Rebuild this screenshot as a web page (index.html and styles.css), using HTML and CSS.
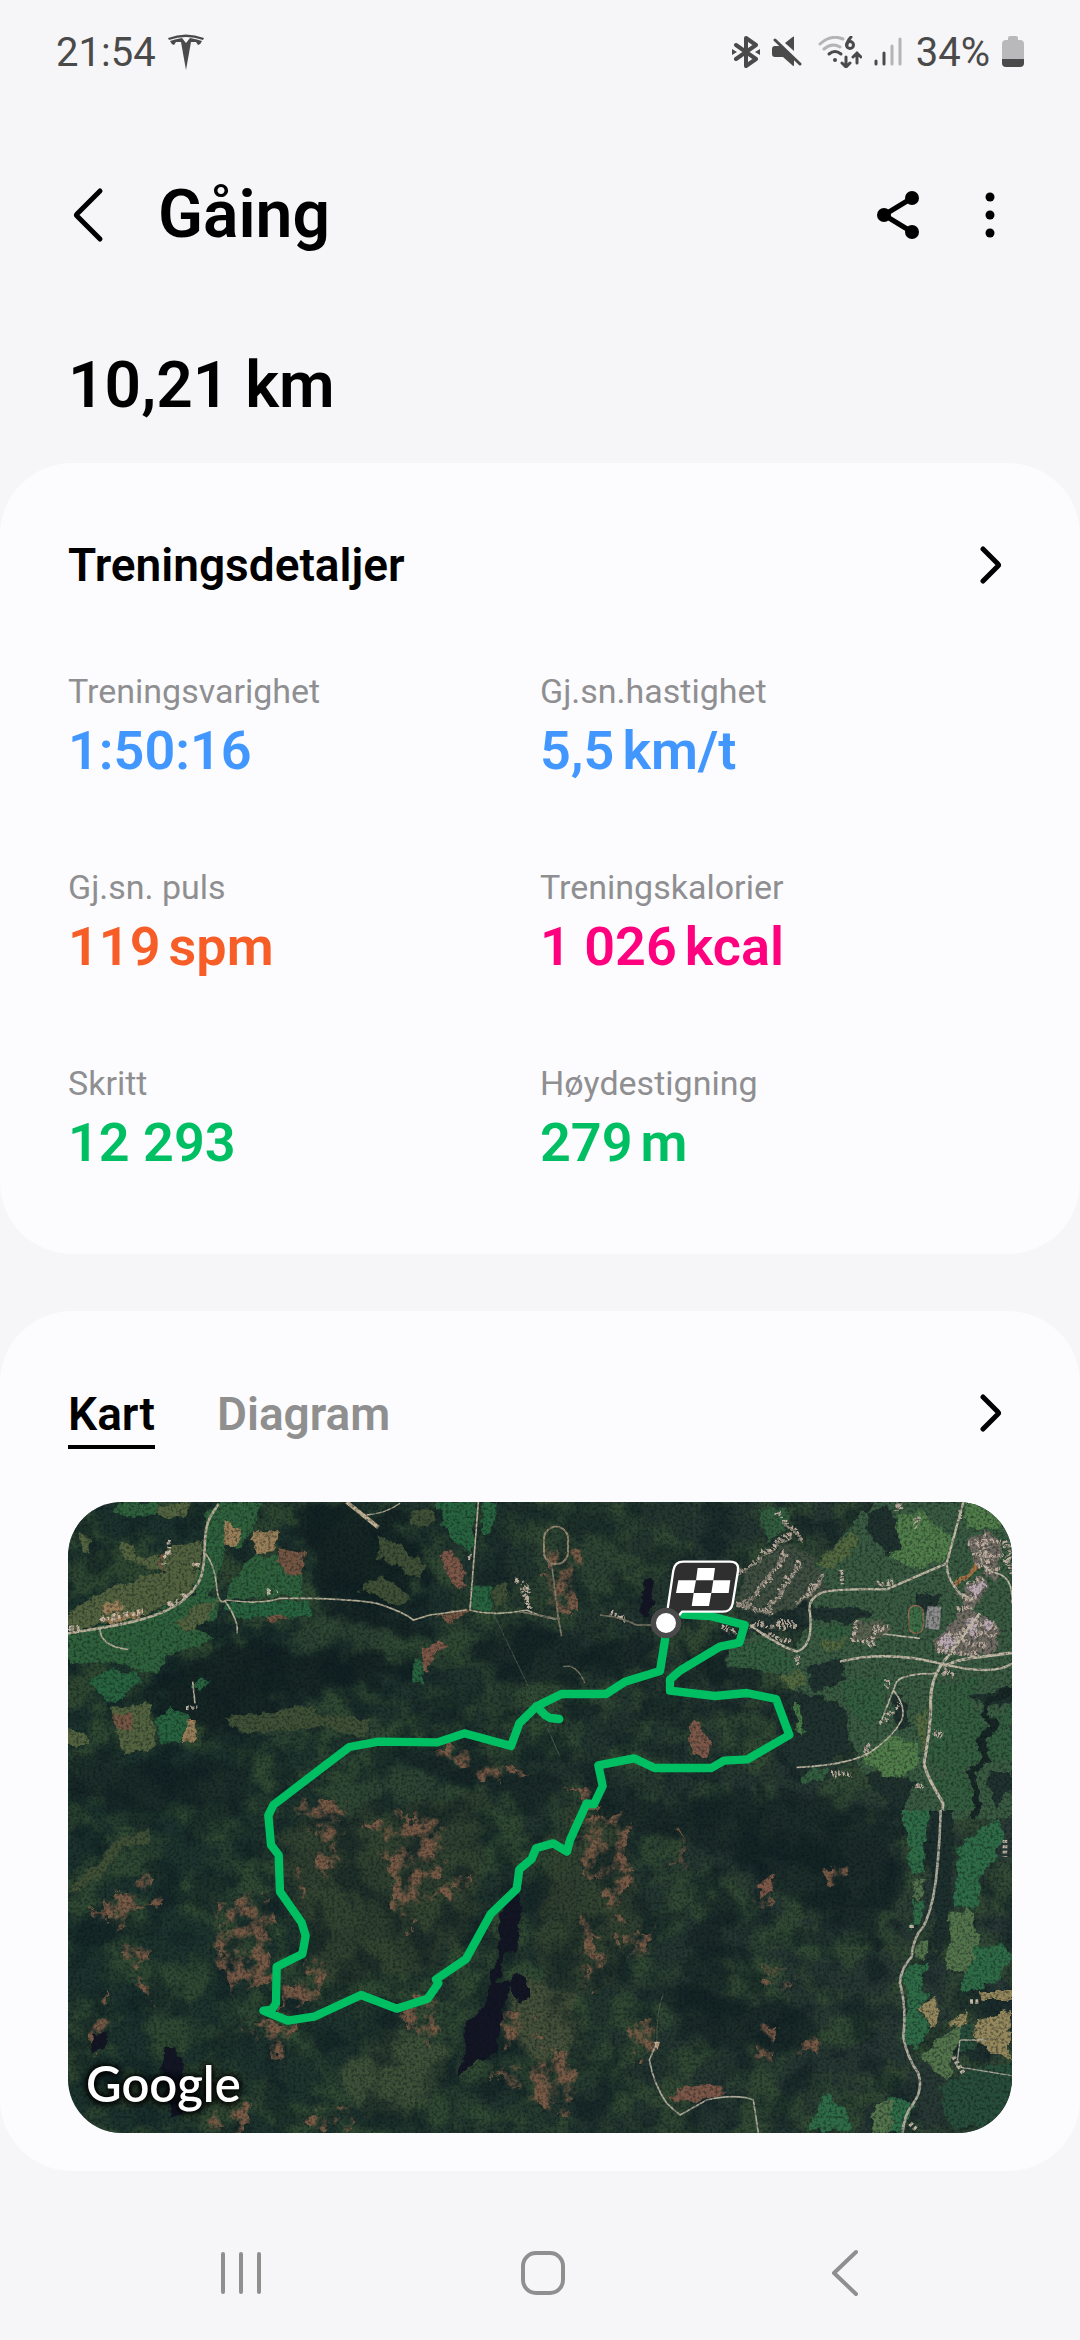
FILE: index.html
```html
<!DOCTYPE html>
<html lang="nb">
<head>
    <meta charset="UTF-8">
    <meta name="viewport" content="width=device-width, initial-scale=1.0">
    <title>Gåing</title>
    <link rel="stylesheet" href="styles.css">
</head>
<body>
    <div class="status-bar">
        <div class="status-left">
            <span>21:54</span>
            <svg width="36" height="36" viewBox="0 0 36 36" fill="#4a4a4a" aria-hidden="true">
                <path d="M0 4Q18-3 36 4L35 6Q18 0 1 6Z"/>
                <path d="M2 7Q8 5 14 4L18 9L22 4Q28 5 34 7Q33 10 30 11L28 8L23 8L18 36L13 8L8 8L6 11Q3 10 2 7Z"/>
            </svg>
        </div>
        <div class="status-right">
            <svg width="28" height="32" viewBox="0 0 28 32" aria-hidden="true">
                <path d="M4 9L24 23L14 30V2L24 9L4 23" fill="none" stroke="#4a4a4a" stroke-width="4" stroke-linejoin="round" stroke-linecap="round"/>
                <path d="M0 13L5 16L0 19ZM28 13L23 16L28 19Z" fill="#4a4a4a"/>
            </svg>
            <svg width="30" height="32" viewBox="0 0 30 32" fill="#4a4a4a" aria-hidden="true">
                <path d="M22 1V15L13 7L20 1.500Q22 0 22 1Z"/>
                <path d="M3 10H8L22 23V29Q22 31 20 29L11 21H3Q0 21 0 18V13Q0 10 3 10Z"/>
                <path d="M3 4L28 28" stroke="#4a4a4a" stroke-width="3" stroke-linecap="round"/>
            </svg>
            <svg class="wifi" width="44" height="32" viewBox="0 0 44 32" fill="none" stroke-linecap="round" stroke-width="3" aria-hidden="true">
                <path d="M2 8Q13-2 25 3M6 13Q14 6 22 11" stroke="#b4b4b6"/>
                <path d="M11 18Q17 13 23 18" stroke="#4a4a4a"/>
                <circle cx="17" cy="24" r="2" fill="#4a4a4a"/>
                <path d="M33 1Q29 5 29 9" stroke="#4a4a4a"/>
                <circle cx="32" cy="9" r="3.500" stroke="#4a4a4a"/>
                <path d="M28 21V30M24 27L28 31L32 27M39 27V18M35 21L39 17L43 21" stroke="#4a4a4a"/>
            </svg>
            <svg width="28" height="32" viewBox="0 0 28 32" fill="none" stroke-linecap="round" stroke-width="3" aria-hidden="true">
                <path d="M2 25V28M10 17V28" stroke="#4a4a4a"/>
                <path d="M18 10V28M26 3V28" stroke="#b4b4b6"/>
            </svg>
            <span class="battery-text">34%</span>
            <svg width="22" height="32" viewBox="0 0 22 32" aria-hidden="true">
                <path d="M8 0H14Q16 0 16 2V4H18Q22 4 22 8V24H0V8Q0 4 4 4H6V2Q6 0 8 0Z" fill="#b9b9bb"/>
                <path d="M0 23H22V27Q22 31 18 31H4Q0 31 0 27Z" fill="#4a4a4a"/>
            </svg>
        </div>
    </div>

    <header class="app-bar">
        <button class="icon-btn" aria-label="Tilbake">
            <svg width="40" height="60" viewBox="0 0 40 60"><path d="M32 6L9 29Q8 30 9 31L32 54" class="line"/></svg>
        </button>
        <h1>Gåing</h1>
        <button class="icon-btn" aria-label="Del">
            <svg width="48" height="48" viewBox="0 0 48 48">
                <path d="M38 7L10 24L38 41" fill="none" stroke="#000" stroke-width="5"/>
                <circle cx="10" cy="24" r="7"/><circle cx="38" cy="7" r="7"/><circle cx="38" cy="41" r="7"/>
            </svg>
        </button>
        <button class="icon-btn menu-btn" aria-label="Flere valg">
            <svg width="20" height="48" viewBox="0 0 20 48">
                <circle cx="10" cy="6" r="4.500"/><circle cx="10" cy="24" r="4.500"/><circle cx="10" cy="42" r="4.500"/>
            </svg>
        </button>
    </header>

    <main>
        <p class="distance">10,21 km</p>

        <section class="card details">
            <div class="card-head">
                <h2>Treningsdetaljer</h2>
                <button class="icon-btn" aria-label="Vis treningsdetaljer">
                    <svg width="32" height="44" viewBox="0 0 32 44"><path d="M3 6L18 21Q19 22 18 23L3 38" class="line"/></svg>
                </button>
            </div>
            <dl class="stats">
                <div><dt>Treningsvarighet</dt><dd class="blue">1:50:16</dd></div>
                <div><dt>Gj.sn.hastighet</dt><dd class="blue">5,5<span class="unit">km/t</span></dd></div>
                <div><dt>Gj.sn. puls</dt><dd class="orange">119<span class="unit">spm</span></dd></div>
                <div><dt>Treningskalorier</dt><dd class="pink">1 026<span class="unit">kcal</span></dd></div>
                <div><dt>Skritt</dt><dd class="green">12 293</dd></div>
                <div><dt>Høydestigning</dt><dd class="green">279<span class="unit">m</span></dd></div>
            </dl>
        </section>

        <section class="card">
            <div class="card-head">
                <div class="tabs" role="tablist">
                    <button class="tab active" role="tab" aria-selected="true">Kart</button>
                    <button class="tab" role="tab" aria-selected="false">Diagram</button>
                </div>
                <button class="icon-btn" aria-label="Vis kart">
                    <svg width="32" height="44" viewBox="0 0 32 44"><path d="M3 6L18 21Q19 22 18 23L3 38" class="line"/></svg>
                </button>
            </div>

            <div class="map">
                <svg viewBox="0 0 2832 1893" role="img" aria-label="Kart over turen">
                    <defs>
                        <filter id="rough" x="0" y="0" width="2832" height="1893" filterUnits="userSpaceOnUse">
                            <feTurbulence type="fractalNoise" baseFrequency="0.015" numOctaves="5" seed="3" result="n"/>
                            <feDisplacementMap in="SourceGraphic" in2="n" scale="130" xChannelSelector="R" yChannelSelector="G"/>
                            <feGaussianBlur stdDeviation="7"/>
                        </filter>
                        <filter id="edge" x="0" y="0" width="2832" height="1893" filterUnits="userSpaceOnUse">
                            <feTurbulence type="fractalNoise" baseFrequency="0.03" numOctaves="3" seed="8" result="n"/>
                            <feDisplacementMap in="SourceGraphic" in2="n" scale="34" xChannelSelector="R" yChannelSelector="G"/>
                        </filter>
                        <filter id="hills" x="0" y="0" width="100%" height="100%">
                            <feTurbulence type="fractalNoise" baseFrequency="0.008" numOctaves="6" seed="11"/>
                            <feColorMatrix values="0 0 0 0 .22  0 0 0 0 .32  0 0 0 0 .21  5 0 0 0 -2.1"/>
                        </filter>
                        <filter id="shade" x="0" y="0" width="100%" height="100%">
                            <feTurbulence type="fractalNoise" baseFrequency="0.009" numOctaves="6" seed="29"/>
                            <feColorMatrix values="0 0 0 0 .06  0 0 0 0 .12  0 0 0 0 .14  0 5 0 0 -2.4"/>
                        </filter>
                        <filter id="grain" x="0" y="0" width="100%" height="100%">
                            <feTurbulence type="fractalNoise" baseFrequency="0.12" numOctaves="3" seed="5"/>
                            <feColorMatrix values="0 0 0 0 .03  0 0 0 0 .07  0 0 0 0 .08  0 0 3 0 -1.3"/>
                        </filter>
                        <filter id="soil" x="0" y="0" width="2832" height="1893" filterUnits="userSpaceOnUse">
                            <feTurbulence type="fractalNoise" baseFrequency="0.02" numOctaves="5" seed="17" result="n"/>
                            <feDisplacementMap in="SourceGraphic" in2="n" scale="90" xChannelSelector="R" yChannelSelector="G" result="d"/>
                            <feColorMatrix in="n" values="0 0 0 0 1  0 0 0 0 1  0 0 0 0 1  0 0 5 0 -2.1" result="m"/>
                            <feComposite in="d" in2="m" operator="in"/>
                            <feGaussianBlur stdDeviation="2"/>
                        </filter>
                        <linearGradient id="land" x2="1">
                            <stop offset="0" stop-color="#1c332d"/>
                            <stop offset=".5" stop-color="#22352e"/>
                            <stop offset="1" stop-color="#2a3a36"/>
                        </linearGradient>
                    </defs>

                    <rect width="2832" height="1893" fill="url(#land)"/>
                    <rect width="2832" height="1893" filter="url(#hills)" opacity=".7"/>

                    <!-- lighter slopes and dark ridges -->
                    <g filter="url(#rough)">
                        <path d="M640 360L860 350L1040 400L930 450L680 430ZM480 640L740 600L960 660L940 720L740 700L560 715ZM780 840L1060 800L1200 880L1180 1000L860 1010ZM1400 20L1640 10V330L1440 330Z" fill="#314734" opacity=".8"/>
                        <path d="M640 960L1250 880L1240 1200L1040 1450L740 1440L680 1250ZM1480 940L1700 920L1720 1300L1560 1500L1400 1340Z" fill="#354330" opacity=".7"/>
                        <path d="M820 1700L1000 1570L1150 1650L1110 1800L950 1860L850 1790Z" fill="#3d5138"/>
                        <path d="M1340 1400L1500 1480L1540 1640L1420 1700L1300 1600Z" fill="#445039"/>
                        <path d="M660 20H840L1000 60L1090 200L1020 330L760 280L720 130ZM220 560L480 430L960 450L1040 520L700 580L420 700L300 620ZM740 310Q920 290 1080 370L1060 420Q900 370 740 350Z" fill="#142424" opacity=".9"/>
                        <path d="M0 760L560 780L540 900L200 930L0 900ZM900 700L1300 800L1500 860L1400 890L1100 820ZM1540 900L2100 860L2500 960L2460 1340L2160 1200L1980 1060L1620 960ZM1840 1380L1960 1100L2010 1200L1960 1500L2160 1500L2260 1640L1960 1650L1820 1580ZM1300 380L1760 420L1700 500L1400 560L1200 480ZM1840 440L2060 480L2160 600L1980 540L1860 540ZM2120 600L2340 640L2300 740L2180 760Z" fill="#172727" opacity=".75"/>
                    </g>
                    <rect width="2832" height="1893" filter="url(#shade)" opacity=".55"/>

                    <!-- clear-cut areas -->
                    <g filter="url(#soil)" fill="#86604a" opacity=".85">
                        <path d="M670 900L830 880L820 990L790 1150L740 1100L750 980ZM900 960L1130 930L1120 1070L1020 1280L980 1200L960 1080ZM440 1200L620 1180L600 1440L520 1500L450 1400ZM1040 1180L1220 1120L1180 1200Z"/>
                        <path d="M640 1450L760 1370L780 1440L720 1510L640 1540ZM520 1550L680 1560L640 1680L560 1600ZM970 1520L1120 1480L1100 1640ZM80 1220L240 1120L280 1190L120 1280ZM60 1560L120 1450L130 1600L80 1640ZM150 1340L270 1330L180 1430ZM180 1430L240 1440L250 1500ZM720 1830L880 1810L840 1880L720 1880ZM400 1830L560 1810L520 1893H420Z"/>
                        <path d="M1510 960L1680 920L1690 1120L1560 1140ZM1600 1120L1680 1120L1650 1340L1620 1240ZM1540 1220L1590 1240L1600 1400L1550 1480ZM1680 1300L1790 1280L1700 1380ZM2060 1150L2140 1100L2120 1200L2060 1220ZM2260 1100L2340 1090L2320 1180ZM1830 950L1860 1100L1820 1100ZM2080 1380L2200 1410L2120 1490ZM1680 1580L1760 1540L1770 1640L1700 1670ZM2180 1640L2270 1600L2250 1680ZM2060 1580L2120 1580L2120 1680H2070ZM1260 1710L1500 1640L1540 1780L1480 1860L1380 1780ZM1290 1540L1400 1520L1420 1600L1320 1640Z"/>
                        <path d="M1440 140L1530 150L1520 330L1440 320ZM1480 860L1600 860L1580 930ZM1100 740L1200 740L1370 820L1300 850ZM660 1100L700 1080L700 1200Z"/>
                    </g>
                    <path filter="url(#edge)" d="M1800 1780L1840 1760L1900 1750L1960 1755L1965 1780L1900 1795L1820 1800ZM2070 1150L2120 1110L2115 1160L2080 1195ZM1130 140L1155 145L1195 220L1185 260L1145 240L1115 180ZM1065 440L1110 418L1145 435L1100 460L1075 510L1060 500ZM1860 670L1890 660L1930 730L1905 765L1875 765Z" fill="#7d5848"/>

                    <!-- lakes -->
                    <g filter="url(#edge)" fill="#131524">
                        <path d="M1320 1190L1350 1180L1365 1220L1350 1330L1310 1360L1290 1440L1320 1440L1350 1410L1380 1430L1380 1490L1350 1500L1320 1460L1300 1540L1280 1660L1220 1680L1170 1720L1190 1650L1190 1560L1250 1520L1265 1440L1290 1360L1295 1240Z"/>
                        <path d="M1730 230L1745 230L1760 300L1735 350L1718 340ZM290 1640L320 1630L350 1700L340 1840L310 1840L280 1700ZM75 1600L120 1590L110 1640L70 1650Z"/>
                    </g>

                    <!-- fields, west -->
                    <g transform="translate(-24 -36)">
                        <g filter="url(#edge)">
                            <path d="M165 36H290L285 80L220 85L160 70ZM440 60L500 36H600L580 110L540 180L500 140L470 290L430 320L400 290L430 200ZM590 195L650 200L730 270L720 320L500 325L520 260ZM24 432L240 388L350 345L420 300L480 330L470 380L400 410L460 440L380 480L320 500L290 555L210 540L190 520L24 522Z" fill="#2f613c"/>
                            <path d="M490 340L755 330V380L600 385L520 385ZM85 570L180 530L250 570L200 610L170 640L120 620ZM285 690L330 650L390 680L360 755L300 755ZM395 580L450 565L415 610ZM1130 36H1250L1235 190L1190 160L1150 110ZM1270 36H1310L1295 130L1265 130ZM1235 290H1295V360L1230 355ZM1060 500L1085 510L1090 590L1060 580Z" fill="#28633f"/>
                            <path d="M290 45L390 40L380 75L320 85L285 70ZM175 155L215 160L230 200L300 200L330 170L430 150L420 230L350 260L290 240L230 225L190 200ZM24 370L120 310L250 260L330 250L420 240L400 300L330 350L240 380L24 425ZM150 650L270 640L290 770L190 790ZM24 710L90 740L80 765L24 765ZM350 400L400 350L480 330L440 390L380 430ZM50 130L85 135L95 190L70 180Z" fill="#53633f"/>
                            <path d="M950 140L1000 150L1100 230L1080 260L1020 240L960 200ZM1045 60L1130 60L1110 110L1060 110ZM900 300L960 250L1050 330L1020 350ZM495 680L640 670L720 640L770 670L930 690L900 745L800 710L640 720L540 735ZM1300 290L1350 280L1330 350L1300 350ZM24 1200L100 1130L180 1040L270 1020L270 1060L190 1070L130 1150L60 1200Z" fill="#3f5036"/>
                            <path d="M490 90L545 120L530 165L495 165ZM575 130L660 130L640 180L590 195ZM120 340L190 330L180 365L120 370ZM380 690L410 690V750L365 760ZM120 380L260 360L240 385L150 402Z" fill="#9a8059"/>
                            <path d="M660 175L735 185L725 265L690 250L650 215ZM610 380H680L640 405ZM160 670L230 675L210 720L165 715ZM1130 370L1230 360L1160 405ZM300 200L320 180L300 260Z" fill="#745643"/>
                        </g>
                        <g fill="none" stroke="#b5ae96" stroke-width="5">
                            <path d="M24 430C150 410 300 390 370 330S430 230 435 150S465 70 475 40" stroke-width="8"/>
                            <path d="M437 190Q465 230 470 290T500 330Q600 345 660 325L760 325M497 335Q540 400 530 430M405 640L398 575M120 415Q120 470 205 478"/>
                            <path d="M760 325Q900 330 950 340Q1030 365 1060 390L1110 375L1220 360M1255 36L1230 360Q1300 380 1400 360Q1450 385 1500 388"/>
                            <path d="M860 36L955 112" stroke="#c0b093" stroke-width="12"/>
                            <path d="M920 75Q980 70 1020 40" stroke-width="4"/>
                            <path d="M1300 370L1420 620L1500 800" stroke="#46584b" stroke-width="3"/>
                        </g>
                        <g filter="url(#edge)" fill="none" stroke="#c9b8a6" stroke-width="14" stroke-dasharray="14 8 6 9">
                            <path d="M325 150L320 220M120 385L260 365M330 345L380 310M24 415H60M620 310L655 300M375 650L415 650M1360 270L1405 300V350M410 230V210M1220 200H1240"/>
                        </g>
                    </g>

                    <!-- fields and town, east -->
                    <g transform="translate(1356 -36)">
                        <g filter="url(#edge)">
                            <path d="M870 260L950 160L1010 90L1060 36H1480V990H1250L1140 970L1190 870L1110 850L1020 850L1000 770L960 640L830 600L780 545L620 530L620 470L700 430L820 480L870 400Z" fill="#3a5a41"/>
                            <path d="M1130 80L1200 60L1290 140L1280 210L1190 240L1100 200ZM1330 36H1400L1455 120L1340 110ZM1030 800L1110 730L1190 760L1200 820L1110 880Z" fill="#517d4a"/>
                            <path d="M960 580L1100 560L1090 680L1020 700L980 640ZM1245 590L1380 560L1350 640L1395 700L1390 800L1300 860L1225 820ZM1400 720L1476 640V810L1400 810ZM1240 870L1350 850L1365 960L1280 950ZM870 410H990V430L910 450ZM620 480L740 440L830 520L790 545L640 530ZM840 850L920 830V870L850 880ZM720 60L800 50V120L740 150Z" fill="#335d3e"/>
                            <path d="M890 220L1000 120L1010 170L940 240ZM780 560L840 540L860 580L810 600ZM1180 700L1220 650V800ZM900 460L980 440L960 480L910 490Z" fill="#52683f"/>
                            <path d="M1040 60L1110 50L1150 180L1100 200L1050 130ZM860 530L960 500L980 570L880 610ZM1340 620L1476 590V640L1400 650ZM870 360L990 350L1060 370L980 400L880 390ZM850 620L980 650L990 780L840 860L780 780ZM1110 620L1150 620L1170 700L1130 720ZM1400 840L1476 840V900L1420 960ZM1190 310L1260 310L1240 370H1190ZM1030 850L1180 870L1140 960L1060 900Z" fill="#20322e"/>
                            <path d="M830 640L860 720L840 730L815 640Z" fill="#477845"/>
                            <path d="M680 240L800 160L860 180L900 250L920 300L840 350L740 380L650 350Z" fill="#404f41"/>
                        </g>
                        <path filter="url(#edge)" d="M1480 600L1410 630L1390 675L1425 700L1385 750L1400 810L1350 850L1370 900L1365 990" fill="none" stroke="#182725" stroke-width="20"/>
                        <!-- built-up area -->
                        <g filter="url(#edge)">
                            <path d="M1340 150L1400 120L1450 160L1430 280L1400 250L1360 210ZM1310 320L1390 250L1400 310L1350 360ZM1250 450L1330 350L1430 400L1440 470L1380 500L1300 490L1240 480Z" fill="#716c63"/>
                            <path d="M1000 400L1080 390L1120 420L1060 460L1000 450Z" fill="#59624f"/>
                            <path d="M1300 280L1370 220L1378 232L1310 295Z" fill="#a57446"/>
                            <g fill="none" stroke="#bfada0" stroke-width="15" stroke-dasharray="9 5 6 7">
                                <path d="M770 70L850 150M810 130L730 190L660 250M800 190L760 250L690 330M840 220L790 290L740 370M910 260L880 290L830 340M650 340L760 370M700 410L830 400M720 430L820 460M960 240L970 290M1070 280H1120M1010 400L1000 450L1060 460L1060 410L1110 415M1190 80V110M1140 40V60"/>
                                <path d="M1340 160L1440 150M1350 190L1450 200M1370 230L1440 240M1390 130L1400 220M1320 60V90M1460 150L1476 260M1100 570V590M1080 700L1140 640M1240 720L1270 740M1270 540L1300 560M1040 770V790M600 410L650 430M930 850H1000M1190 880L1220 890M830 500V520M0 290L30 350M270 370L310 385"/>
                                <path d="M1340 280L1390 270M1320 320L1370 330M1310 360L1360 350M1340 390L1430 410M1330 420L1430 440M1300 450L1400 470M1260 460L1310 480M1250 480L1380 495M1290 430L1330 440"/>
                            </g>
                            <g fill="none" stroke="#8d8578" stroke-width="6">
                                <path d="M790 100L850 145M815 140L660 245M800 190L690 330L650 345M830 230L740 370L660 340M910 260Q900 300 830 345"/>
                            </g>
                            <path d="M1345 300L1375 280L1395 290L1365 325ZM1265 445L1290 430L1305 465L1275 485ZM1335 395L1365 380L1380 420L1350 440ZM1385 400L1415 390L1405 420Z" fill="#bbaab2"/>
                        </g>
                        <path d="M1222 348L1264 350L1258 420L1215 415Z" fill="#8c8c8c"/>
                        <rect x="1166" y="346" width="44" height="84" rx="22" fill="#3d6e45" stroke="#9a6a55" stroke-width="4"/>
                        <g fill="none" stroke="#c0b8a4" stroke-width="7">
                            <path d="M690 405Q780 470 830 485Q880 470 870 370Q860 330 900 310Q930 295 1100 298L1280 220L1330 36M1280 220Q1280 270 1320 310L1360 330M960 515Q1100 480 1260 520T1476 520"/>
                            <path d="M1476 488L1350 505Q1310 510 1270 530M1380 370L1260 530Q1230 580 1232 640T1212 820Q1220 860 1270 940L1260 990" stroke-width="9"/>
                            <path d="M1250 550Q1150 550 1130 575L1085 690M1120 600Q1160 650 1145 690Q1120 740 1060 780Q1000 825 830 832M1090 432L1200 445M1380 180Q1380 240 1430 250T1476 340" stroke-width="5"/>
                            <rect x="72" y="110" width="72" height="112" rx="36" stroke="#94866c" stroke-width="6"/>
                            <path d="M95 222L115 385L125 440M0 365L120 388M240 375Q300 380 350 405H400" stroke="#7f7a67" stroke-width="5"/>
                            <path d="M130 530Q170 520 195 580" stroke="#7f7a67" stroke-width="4"/>
                        </g>
                    </g>

                    <!-- fields and roads, south-east -->
                    <g transform="translate(1356 924)">
                        <g filter="url(#edge)">
                            <path d="M1145 0H1230L1210 110L1215 180L1170 200L1160 80ZM1180 270H1215L1200 340L1180 370ZM1160 470L1225 460L1200 520L1225 560L1190 600L1225 660L1180 730L1150 680L1165 580L1145 510ZM1320 110L1440 20L1450 100L1385 200L1370 300L1300 290ZM1350 410L1450 400L1476 440L1430 520L1320 550ZM915 850L980 900L990 960H860ZM1060 930L1110 860L1190 880L1140 968H1050Z" fill="#2f6b46"/>
                            <path d="M1200 740L1320 640V700L1290 750L1290 820ZM1290 310L1350 300L1380 390L1340 480L1280 480ZM1190 210H1210L1200 270L1185 260ZM1180 400L1225 400L1220 440H1180ZM1070 880L1130 870L1110 968H1050Z" fill="#54744c"/>
                            <path d="M1190 590L1255 560L1255 640L1230 660ZM1280 640L1340 600V640L1290 650ZM1360 640L1470 600V750L1370 700ZM1370 540L1476 540V570L1390 570Z" fill="#95885d"/>
                            <path d="M1320 640H1360V720L1320 730ZM1360 770L1476 760V900L1400 950L1290 950L1260 830Z" fill="#284d3a"/>
                            <path d="M1340 720L1400 710L1390 750L1350 760ZM1230 0H1300L1290 300L1250 480L1240 300Z" fill="#1e302d"/>
                        </g>
                        <g fill="none" stroke="#aeab9b" stroke-width="8">
                            <path d="M1262 0Q1260 90 1250 190T1210 350Q1180 380 1175 440Q1140 480 1140 520Q1160 590 1150 680Q1160 740 1195 790Q1210 840 1180 880Q1150 920 1148 968"/>
                            <path d="M410 700L388 750Q400 820 440 880L480 915L560 870Q650 850 700 870L715 968" stroke-width="5"/>
                            <path d="M1320 690L1310 770L1476 797M1320 690H1400" stroke-width="4"/>
                            <path d="M410 700Q410 600 430 550" stroke="#56604f" stroke-width="3"/>
                            <path d="M1300 740L1330 790M1175 345V360M1350 575L1380 575M1455 90V140M1170 940L1190 960" stroke="#c6bba9" stroke-width="14" stroke-dasharray="9 7"/>
                        </g>
                        <path d="M402 695H420L412 720Z" fill="#c9a98b"/>
                    </g>

                    <rect width="2832" height="1893" filter="url(#grain)" opacity=".45"/>

                    <!-- walked route -->
                    <g fill="none" stroke="#00bf63" stroke-width="25" stroke-linejoin="round" stroke-linecap="round">
                        <path d="M1794 363L1791 414L1776 507L1671 539L1614 576H1481L1406 613L1354 664L1329 732L1189 694L1108 721L931 719L844 735L616 909L601 940L609 1029L632 1059L636 1169L701 1262L713 1302L703 1356L626 1394L624 1504L611 1524L586 1526L659 1556L738 1544L879 1479L986 1520L1079 1490L1111 1444L1104 1432L1194 1371L1268 1236L1346 1161L1354 1102L1391 1071L1404 1039L1456 1024L1497 1049L1506 1014L1556 904L1578 907L1604 852L1591 790L1698 769L1760 798H1930L1968 776L2038 772L2164 699L2124 591L2036 573L1941 582L1806 566V532L1836 506L1956 434L2014 422L2030 369L1926 342L1846 338"/>
                        <path d="M1406 613L1431 639L1446 648L1474 651"/>
                    </g>

                    <!-- finish flag and start point -->
                    <g transform="translate(1356 -36)">
                        <path d="M442 362L460 242Q464 215 490 215H630Q658 215 654 242L638 340Q634 365 608 365H486L470 385Z" fill="#2f2f2f" stroke="#fff" stroke-width="7" stroke-linejoin="round"/>
                        <path d="M533 234H585L580 271H631L626 309H574L567 348H515L521 309H468L475 271H528ZM528 271L521 309H574L580 271Z" fill="#fff" fill-rule="evenodd"/>
                        <circle cx="438" cy="399" r="38" fill="#fff" stroke="#4a4a4a" stroke-width="16"/>
                    </g>
                </svg>
                <span class="map-brand">Google</span>
            </div>
        </section>
    </main>

    <nav class="nav-bar">
        <button class="icon-btn" aria-label="Nylige apper">
            <svg width="48" height="48" viewBox="0 0 48 48"><path d="M6 5V43M24 5V43M42 5V43" class="nav-line"/></svg>
        </button>
        <button class="icon-btn" aria-label="Hjem">
            <svg width="48" height="48" viewBox="0 0 48 48"><rect x="4" y="4" width="40" height="40" rx="13" class="nav-line"/></svg>
        </button>
        <button class="icon-btn" aria-label="Tilbake">
            <svg width="48" height="48" viewBox="0 0 48 48"><path d="M35 3L13 24L35 45" class="nav-line"/></svg>
        </button>
    </nav>
</body>
</html>
```
FILE: styles.css
```css
* {
    box-sizing: border-box;
}
body {
    margin: 0;
    background: #f6f6f8;
    color: #000;
    font-family: Roboto, "Noto Sans", sans-serif;
}
h1, h2, p, dl, dd {
    margin: 0;
}
svg {
    display: block;
}
.icon-btn {
    display: block;
    padding: 0;
    border: none;
    background: none;
    cursor: pointer;
}
.line {
    fill: none;
    stroke: #000;
    stroke-width: 5px;
    stroke-linecap: round;
    stroke-linejoin: round;
}

/* status bar */
.status-bar {
    display: flex;
    justify-content: space-between;
    align-items: center;
    height: 104px;
    padding: 0 56px;
    color: #4a4a4a;
    font-size: 40px;
}
.status-left {
    display: flex;
    align-items: center;
    gap: 12px;
}
.status-right {
    display: flex;
    align-items: center;
    gap: 12px;
}
.wifi {
    margin-left: 4px;
}
.battery-text {
    margin-left: 2px;
}

/* app bar */
.app-bar {
    display: flex;
    align-items: center;
    padding: 71px 80px 71px 68px;
}
.app-bar h1 {
    flex: 1;
    margin-left: 50px;
    font-size: 66px;
    font-weight: 600;
    line-height: 80px;
}
.menu-btn {
    margin-left: 58px;
}
.distance {
    padding: 20px 68px 37px;
    font-size: 64px;
    font-weight: 600;
    line-height: 80px;
}

/* cards */
.card {
    padding: 72px 68px 38px;
    background: #fcfcfe;
    border-radius: 72px;
}
.card.details {
    margin-bottom: 57px;
    padding-bottom: 73px;
}
.card-head {
    display: flex;
    justify-content: space-between;
    align-items: flex-start;
    height: 64px;
}
.card-head h2 {
    font-size: 46px;
    font-weight: 600;
    line-height: 60px;
}
.card-head .icon-btn {
    margin-top: 8px;
}
.stats {
    display: grid;
    grid-template-columns: 1fr 1fr;
    row-gap: 76px;
    margin-top: 70px;
}
.stats dt {
    color: #8f8f92;
    font-size: 34px;
    line-height: 44px;
}
.stats dd {
    font-size: 54px;
    font-weight: 600;
    line-height: 76px;
}
.unit {
    margin-left: 8px;
}
.blue { color: #4297ff; }
.orange { color: #f65d27; }
.pink { color: #ff007f; }
.green { color: #00bf63; }

/* map card */
.tabs {
    display: flex;
    gap: 62px;
}
.tab {
    padding: 0;
    border: none;
    border-bottom: 4px solid transparent;
    background: none;
    color: #8f8f8f;
    font-family: inherit;
    font-size: 46px;
    font-weight: 600;
    line-height: 62px;
    cursor: pointer;
}
.tab.active {
    color: #000;
    border-bottom-color: #000;
}
.map {
    position: relative;
    margin-top: 55px;
    border-radius: 54px;
    overflow: hidden;
}
.map svg {
    width: 100%;
    color-interpolation-filters: sRGB;
}
.map-brand {
    position: absolute;
    left: 18px;
    bottom: 20px;
    color: #fff;
    font-family: Lato, sans-serif;
    font-size: 49px;
    font-weight: 600;
    line-height: 60px;
    text-shadow: 0 0 6px #000, 0 0 6px #000, 0 2px 8px #000;
}

/* system navigation */
.nav-bar {
    display: grid;
    grid-template-columns: repeat(3, 1fr);
    justify-items: center;
    padding: 78px 84px 42px 90px;
}
.nav-line {
    fill: none;
    stroke: #8f8f8f;
    stroke-width: 4px;
    stroke-linecap: round;
    stroke-linejoin: round;
}
```
